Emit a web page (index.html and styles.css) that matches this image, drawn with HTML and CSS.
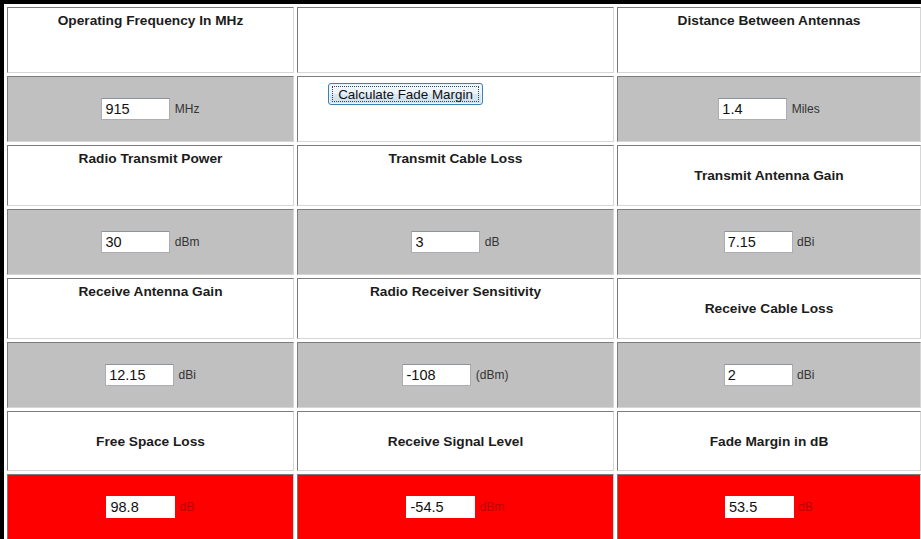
FILE: index.html
```html
<!DOCTYPE html>
<html lang="en">
<head>
    <meta charset="UTF-8">
    <title>Fade Margin Calculator</title>
    <link rel="stylesheet" href="styles.css">
</head>
<body>

    <div class="frame">
        <table class="calc">
            <tr class="label-row r1">
                <td class="c1 top">Operating Frequency In MHz</td>
                <td class="c2"></td>
                <td class="c3 top">Distance Between Antennas</td>
            </tr>
            <tr class="input-row">
                <td><input type="text" value="915"> <span class="unit">MHz</span></td>
                <td class="btn-cell"><button class="calc-btn"><span>Calculate Fade Margin</span></button></td>
                <td><input type="text" value="1.4"> <span class="unit">Miles</span></td>
            </tr>
            <tr class="label-row short">
                <td class="top">Radio Transmit Power</td>
                <td class="top">Transmit Cable Loss</td>
                <td>Transmit Antenna Gain</td>
            </tr>
            <tr class="input-row">
                <td><input type="text" value="30"> <span class="unit">dBm</span></td>
                <td><input type="text" value="3"> <span class="unit">dB</span></td>
                <td><input type="text" value="7.15"> <span class="unit">dBi</span></td>
            </tr>
            <tr class="label-row short">
                <td class="top">Receive Antenna Gain</td>
                <td class="top">Radio Receiver Sensitivity</td>
                <td>Receive Cable Loss</td>
            </tr>
            <tr class="input-row">
                <td><input type="text" value="12.15"> <span class="unit">dBi</span></td>
                <td><input type="text" value="-108"> <span class="unit">(dBm)</span></td>
                <td><input type="text" value="2"> <span class="unit">dBi</span></td>
            </tr>
            <tr class="label-row result-label">
                <td>Free Space Loss</td>
                <td>Receive Signal Level</td>
                <td>Fade Margin in dB</td>
            </tr>
            <tr class="input-row result-row">
                <td><input type="text" value="98.8"> <span class="unit">dB</span></td>
                <td><input type="text" value="-54.5"> <span class="unit">dBm</span></td>
                <td><input type="text" value="53.5"> <span class="unit">dB</span></td>
            </tr>
        </table>
    </div>

</body>
</html>
```

FILE: styles.css
```css
* {
    margin: 0;
    padding: 0;
    box-sizing: border-box;
}

body {
    background-color: white;
    font-family: "Liberation Sans", Arial, sans-serif;
    overflow: hidden;
}

.frame {
    border-left: 4px solid black;
    border-top: 4px solid black;
    width: 930px;
}

.calc {
    table-layout: fixed;
    width: 920px;
    border-collapse: separate;
    border-spacing: 3px;
}

.calc td {
    border: 1px solid;
    border-color: #7c7c7c #d6d6d6 #d6d6d6 #7c7c7c;
    text-align: center;
    vertical-align: middle;
}

.calc .c1 {
    width: 287px;
}

.calc .c2 {
    width: 317px;
}

.calc .c3 {
    width: 304px;
}

/* label rows */
.label-row td {
    background: white;
    color: #1c1c1c;
    font-weight: bold;
    font-size: 13.7px;
}

.label-row td.top {
    vertical-align: top;
    padding-top: 5px;
}

.r1 td {
    height: 66px;
}

.short td {
    height: 61px;
}

.result-label td {
    height: 60px;
}

/* input rows */
.input-row td {
    height: 66px;
    background: #c0c0c0;
    font-size: 12px;
}

.input-row input {
    width: 69px;
    height: 22px;
    padding: 0 3px;
    border: 1px solid #abadb3;
    border-top-color: #8f949c;
    font-family: "Liberation Sans", Arial, sans-serif;
    font-size: 14.5px;
    color: #111;
    background: white;
    vertical-align: middle;
}

.unit {
    color: #333;
    margin-left: 1px;
    vertical-align: middle;
}

.input-row td.btn-cell {
    background: white;
    text-align: left;
    vertical-align: top;
    padding: 6px 0 0 30px;
}

.calc-btn {
    width: 155px;
    height: 22px;
    border: 1px solid #3c7fb1;
    border-radius: 3px;
    background: linear-gradient(#f4f9fd 0%, #e9f3fa 50%, #d9e8f4 51%, #cde0ee 100%);
    box-shadow: inset 0 0 0 1px #eaf6fd;
    font-family: "Liberation Sans", Arial, sans-serif;
    font-size: 13.4px;
    color: #111;
    padding: 2px 3px;
}

.calc-btn span {
    display: block;
    height: 16px;
    line-height: 15px;
    border: 1px dotted #444;
}

/* results */
.result-row td {
    background: #ff0000;
}

.result-row input {
    border-color: #fff;
}

.result-row .unit {
    color: #b80000;
}
```
